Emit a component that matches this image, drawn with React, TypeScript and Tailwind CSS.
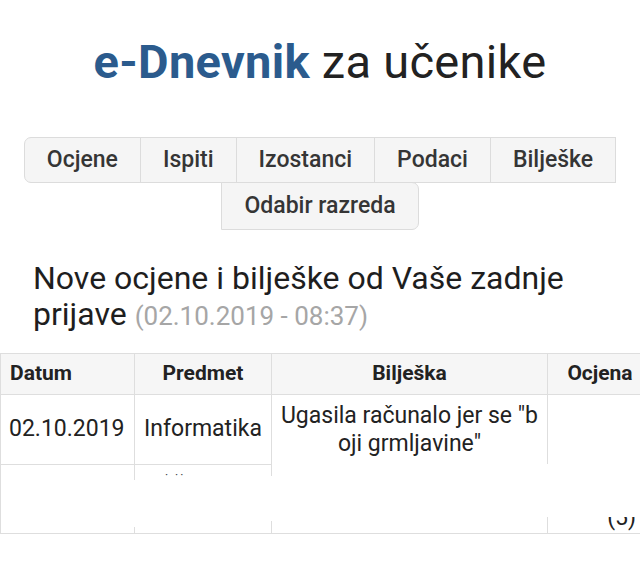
import React from "react";

const tabs = ["Ocjene", "Ispiti", "Izostanci", "Podaci", "Bilješke"];

export default function App() {
  return (
    <div
      className="w-[640px] h-[588px] overflow-hidden bg-white text-[#222]"
      style={{ fontFamily: "Roboto, 'Liberation Sans', sans-serif" }}
    >
      <h1 className="pt-[36px] text-center text-[47px] leading-[52px] tracking-[0.3px]">
        <span className="font-bold text-[#2b5b8d]">e-Dnevnik</span>{" "}
        <span className="font-normal text-[#222]">za učenike</span>
      </h1>

      <div className="mx-auto mt-[49px] flex w-[620px] flex-wrap justify-center">
        {tabs.map((t, i) => (
          <div
            key={t}
            className={
              "flex h-[46px] items-center border border-[#dcdcdc] bg-[#f5f5f5] px-[22px] text-[23px] font-medium text-[#353535] " +
              (i === 0 ? "rounded-l-[7px]" : "-ml-px")
            }
          >
            {t}
          </div>
        ))}
        <div className="-mt-px flex h-[48px] items-center rounded-r-[7px] border border-[#dcdcdc] bg-[#f5f5f5] px-[22px] text-[23px] font-medium text-[#353535]">
          Odabir razreda
        </div>
      </div>

      <h3 className="mt-[30px] px-[33px] text-[32px] font-normal leading-[36px] text-[#1e1e1e]">
        Nove ocjene i bilješke od Vaše zadnje prijave{" "}
        <span className="text-[26px] text-[#a6a6a6]">(02.10.2019 - 08:37)</span>
      </h3>

      <div className="relative mt-[19px] w-[652px]">
        <table className="w-[652px] table-fixed border-collapse text-[23px]">
          <colgroup>
            <col className="w-[134px]" />
            <col className="w-[137px]" />
            <col className="w-[276px]" />
            <col className="w-[105px]" />
          </colgroup>
          <thead>
            <tr className="h-[41px] bg-[#f6f6f6] text-[21px] font-bold text-[#222]">
              <th className="border border-[#dedede] px-[9px] text-left font-bold">Datum</th>
              <th className="border border-[#dedede] text-center font-bold">Predmet</th>
              <th className="border border-[#dedede] text-center font-bold">Bilješka</th>
              <th className="border border-[#dedede] text-center font-bold">Ocjena</th>
            </tr>
          </thead>
          <tbody>
            <tr className="h-[70px]">
              <td className="border border-[#dedede] px-[8px] align-middle">02.10.2019</td>
              <td className="border border-[#dedede] text-center align-middle">Informatika</td>
              <td className="border border-[#dedede] px-[2px] text-center align-middle leading-[28px]">
                Ugasila računalo jer se "b
                <br />
                oji grmljavine"
              </td>
              <td className="border border-[#dedede]"></td>
            </tr>
            <tr className="h-[69px]">
              <td className="border border-[#dedede]"></td>
              <td className="border border-[#dedede] align-top">
                <div className="ml-[30px] mt-[4px] text-[12px] leading-none tracking-[2px] text-[#444]">· ··</div>
              </td>
              <td className="border border-[#dedede]"></td>
              <td className="border border-[#dedede] pb-[3px] pr-[16px] text-right align-bottom leading-[24px]">
                (5)
              </td>
            </tr>
          </tbody>
        </table>
        <div className="absolute left-[3px] top-[127px] h-[47px] w-[134px] bg-white" />
        <div className="absolute left-[136px] top-[123px] h-[45px] w-[138px] bg-white" />
        <div className="absolute left-[272px] top-[111px] h-[53px] w-[278px] bg-white" />
        <div className="absolute left-[549px] top-[111px] h-[53px] w-[100px] bg-white" />
      </div>
    </div>
  );
}
